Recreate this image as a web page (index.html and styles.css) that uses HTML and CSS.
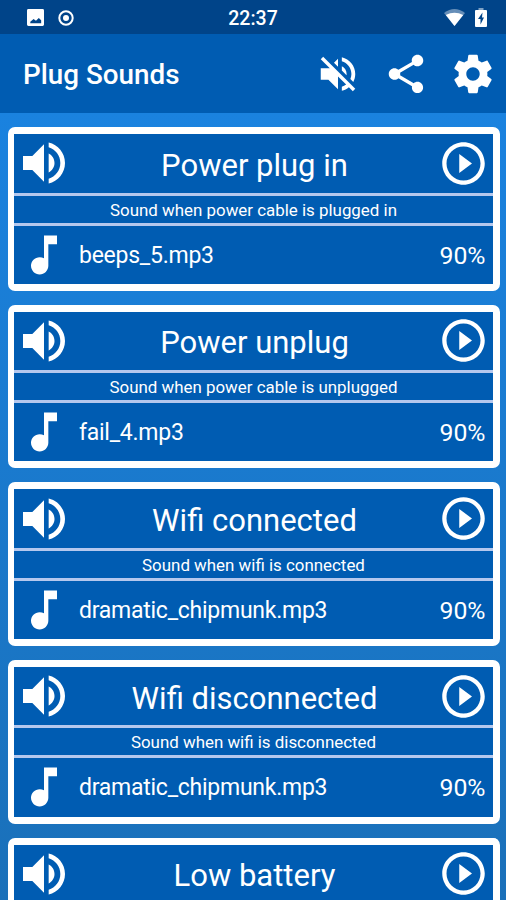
FILE: index.html
```
<!DOCTYPE html>
<html lang="en">
<head>
<meta charset="utf-8">
<title>Plug Sounds</title>
<link rel="stylesheet" href="styles.css">
</head>
<body>
<svg class="defs" aria-hidden="true">
  <symbol id="volume" viewBox="0 0 24 24"><path d="M3 9v6h4l5 5V4L7 9H3zm13.5 3c0-1.77-1.02-3.29-2.5-4.03v8.05c1.48-.73 2.5-2.25 2.5-4.02zM14 3.23v2.06c2.89.86 5 3.54 5 6.71s-2.11 5.85-5 6.71v2.06c4.01-.91 7-4.49 7-8.77s-2.99-7.86-7-8.77z"/></symbol>
  <symbol id="play" viewBox="0 0 24 24"><path d="M10 16.5l6-4.5-6-4.5v9zM12 2C6.48 2 2 6.48 2 12s4.48 10 10 10 10-4.48 10-10S17.52 2 12 2zm0 18c-4.41 0-8-3.59-8-8s3.59-8 8-8 8 3.59 8 8-3.59 8-8 8z"/></symbol>
  <symbol id="note" viewBox="0 0 24 24"><path d="M12 3v10.55c-.59-.34-1.27-.55-2-.55-2.21 0-4 1.79-4 4s1.79 4 4 4 4-1.79 4-4V7h4V3h-6z"/></symbol>
</svg>
<div class="statusbar">
  <div class="status-left">
    <svg class="s-image" viewBox="0 0 18 18"><path fill-rule="evenodd" d="M1.500 0h15a1.500 1.500 0 0 1 1.500 1.500v15a1.500 1.500 0 0 1-1.500 1.500h-15a1.500 1.500 0 0 1-1.500-1.500v-15a1.500 1.500 0 0 1 1.500-1.500zM3.500 15h11.500V12L12.500 9.500 9.500 12.500 7 10.500 3.500 13.500z"/></svg>
    <svg class="s-ring" viewBox="0 0 16 16"><circle cx="8" cy="8" r="6.700" fill="none" stroke="currentColor" stroke-width="2"/><circle cx="8" cy="8" r="3"/></svg>
  </div>
  <span class="clock">22:37</span>
  <div class="status-right">
    <svg class="s-wifi" viewBox="0 0 21 17"><path opacity=".4" d="M0 4Q10.500-4 21 4L10.500 17z"/><path d="M1.800 6Q10.500 1.500 19.200 6L10.500 17z"/></svg>
    <svg class="s-battery" viewBox="0 0 12 19"><path opacity=".5" d="M3.500 0h5v2h-5z"/><path fill-rule="evenodd" d="M1 2h10a1 1 0 0 1 1 1v15a1 1 0 0 1-1 1H1a1 1 0 0 1-1-1V3a1 1 0 0 1 1-1zM7.500 4.500L3 11h2.500v5.500L9 9.500H7z"/></svg>
  </div>
</div>
<header class="appbar">
  <h1>Plug Sounds</h1>
  <svg class="a-mute" viewBox="0 0 24 24"><path d="M16.500 12c0-1.770-1.020-3.290-2.500-4.030v2.210l2.450 2.450c.03-.2.050-.41.050-.63zm2.500 0c0 .94-.2 1.820-.54 2.640l1.510 1.510C20.630 14.910 21 13.500 21 12c0-4.280-2.990-7.860-7-8.770v2.060c2.890.86 5 3.540 5 6.710zM4.270 3L3 4.270 7.730 9H3v6h4l5 5v-6.730l4.250 4.250c-.67.52-1.420.93-2.250 1.180v2.060c1.380-.31 2.630-.95 3.690-1.810L19.730 21 21 19.730l-9-9L4.270 3zM12 4L9.910 6.090 12 8.180V4z"/></svg>
  <svg class="a-share" viewBox="0 0 24 24"><path d="M18 16.080c-.76 0-1.440.3-1.960.77L8.910 12.700c.05-.23.090-.46.090-.7s-.04-.47-.09-.7l7.050-4.110c.54.5 1.250.81 2.040.81 1.660 0 3-1.340 3-3s-1.340-3-3-3-3 1.340-3 3c0 .24.040.47.090.7L8.040 9.810C7.500 9.310 6.790 9 6 9c-1.660 0-3 1.340-3 3s1.340 3 3 3c.79 0 1.500-.31 2.040-.81l7.120 4.160c-.05.21-.08.43-.08.65 0 1.610 1.310 2.920 2.920 2.920s2.920-1.310 2.920-2.920-1.310-2.920-2.920-2.920z"/></svg>
  <svg class="a-gear" viewBox="0 0 24 24"><path d="M19.430 12.980c.04-.32.070-.64.070-.98s-.03-.66-.07-.98l2.110-1.650c.19-.15.240-.42.120-.64l-2-3.460c-.12-.22-.39-.3-.61-.22l-2.490 1c-.52-.4-1.080-.73-1.690-.98l-.38-2.650C14.460 2.180 14.250 2 14 2h-4c-.25 0-.46.180-.49.420l-.38 2.650c-.61.25-1.170.59-1.690.98l-2.490-1c-.23-.09-.49 0-.61.22l-2 3.460c-.13.22-.07.49.120.64l2.110 1.650c-.04.32-.07.65-.07.980s.03.660.07.980l-2.110 1.650c-.19.15-.24.42-.12.640l2 3.460c.12.220.39.300.61.220l2.490-1c.52.400 1.080.730 1.690.980l.38 2.650c.03.240.240.420.490.420h4c.25 0 .46-.18.490-.42l.38-2.650c.61-.25 1.170-.59 1.690-.98l2.490 1c.23.090.490 0 .610-.22l2-3.460c.12-.22.070-.49-.12-.64l-2.110-1.650zM12 15.500c-1.930 0-3.500-1.570-3.500-3.500s1.570-3.500 3.500-3.500 3.500 1.570 3.500 3.500-1.570 3.500-3.500 3.500z"/></svg>
</header>
<main class="list">
  <section class="card">
    <div class="head"><svg class="volume"><use href="#volume"/></svg><h2>Power plug in</h2><svg class="play"><use href="#play"/></svg></div>
    <p class="desc">Sound when power cable is plugged in</p>
    <div class="file"><svg class="note"><use href="#note"/></svg><span class="name">beeps_5.mp3</span><span class="level">90%</span></div>
  </section>
  <section class="card">
    <div class="head"><svg class="volume"><use href="#volume"/></svg><h2>Power unplug</h2><svg class="play"><use href="#play"/></svg></div>
    <p class="desc">Sound when power cable is unplugged</p>
    <div class="file"><svg class="note"><use href="#note"/></svg><span class="name">fail_4.mp3</span><span class="level">90%</span></div>
  </section>
  <section class="card">
    <div class="head"><svg class="volume"><use href="#volume"/></svg><h2>Wifi connected</h2><svg class="play"><use href="#play"/></svg></div>
    <p class="desc">Sound when wifi is connected</p>
    <div class="file"><svg class="note"><use href="#note"/></svg><span class="name">dramatic_chipmunk.mp3</span><span class="level">90%</span></div>
  </section>
  <section class="card">
    <div class="head"><svg class="volume"><use href="#volume"/></svg><h2>Wifi disconnected</h2><svg class="play"><use href="#play"/></svg></div>
    <p class="desc">Sound when wifi is disconnected</p>
    <div class="file"><svg class="note"><use href="#note"/></svg><span class="name">dramatic_chipmunk.mp3</span><span class="level">90%</span></div>
  </section>
  <section class="card last">
    <div class="head"><svg class="volume"><use href="#volume"/></svg><h2>Low battery</h2><svg class="play"><use href="#play"/></svg></div>
  </section>
</main>
</body>
</html>
```
FILE: styles.css
```
* { box-sizing: border-box; margin: 0; }
body {
  height: 900px;
  overflow: hidden;
  display: flex;
  flex-direction: column;
  background: linear-gradient(#1a82df 113px, #1a70b9 900px);
  color: #fff;
  font-family: Roboto, "Liberation Sans", sans-serif;
}
svg { display: block; flex: none; fill: currentColor; }
.defs { display: none; }
.statusbar {
  flex: none;
  height: 34px;
  display: grid;
  grid-template-columns: 1fr auto 1fr;
  align-items: center;
  padding: 1px 19px 0 27px;
  background: #004489;
}
.status-left, .status-right { display: flex; align-items: center; }
.status-left { gap: 14px; }
.status-right { gap: 10px; justify-content: flex-end; }
.s-image { width: 17px; height: 17px; }
.s-ring { width: 16px; height: 16px; }
.s-wifi { width: 21px; height: 17px; }
.s-battery { width: 12px; height: 19px; }
.clock { font-size: 19.5px; font-weight: 500; padding-top: 2px; margin-right: 8px; }
.appbar {
  flex: none;
  height: 79px;
  display: flex;
  align-items: center;
  padding: 0 10px 0 23px;
  background: #005cb2;
}
.appbar h1 { flex: 1; font-size: 27.800px; font-weight: 500; padding-top: 2px; }
.a-mute { width: 46px; height: 46px; margin-right: 22px; }
.a-share { width: 46px; height: 46px; margin-right: 21px; }
.a-gear { width: 46px; height: 46px; }
.list {
  flex: 1;
  min-height: 0;
  overflow: hidden;
  display: flex;
  flex-direction: column;
  gap: 14px;
  padding: 14px 6px 0 8px;
}
.card {
  flex: none;
  height: 163.670px;
  border: 7px solid #fff;
  border-left-width: 6px;
  border-radius: 7px;
  background: #005cb2;
}
.card.last {
  height: auto;
  border-bottom: 0;
  border-radius: 7px 7px 0 0;
}
.head { height: 58.500px; display: flex; align-items: center; padding: 0 4px 0 2px; }
.head h2 { flex: 1; text-align: center; font-size: 31px; font-weight: 400; padding: 4px 1px 0 0; }
.volume { width: 56px; height: 56px; }
.play { width: 51px; height: 51px; }
.desc {
  height: 33px;
  border: solid #b5c8ee;
  border-width: 3px 0;
  text-align: center;
  font-size: 16.900px;
  line-height: 28px;
}
.file { height: 58px; display: flex; align-items: center; padding: 0 7.500px 0 4px; }
.note { width: 52px; height: 52px; }
.name { flex: 1; margin-left: 9px; padding-top: 1px; font-size: 23px; letter-spacing: -.25px; }
.level { padding-top: 1px; font-size: 24.800px; }
```
